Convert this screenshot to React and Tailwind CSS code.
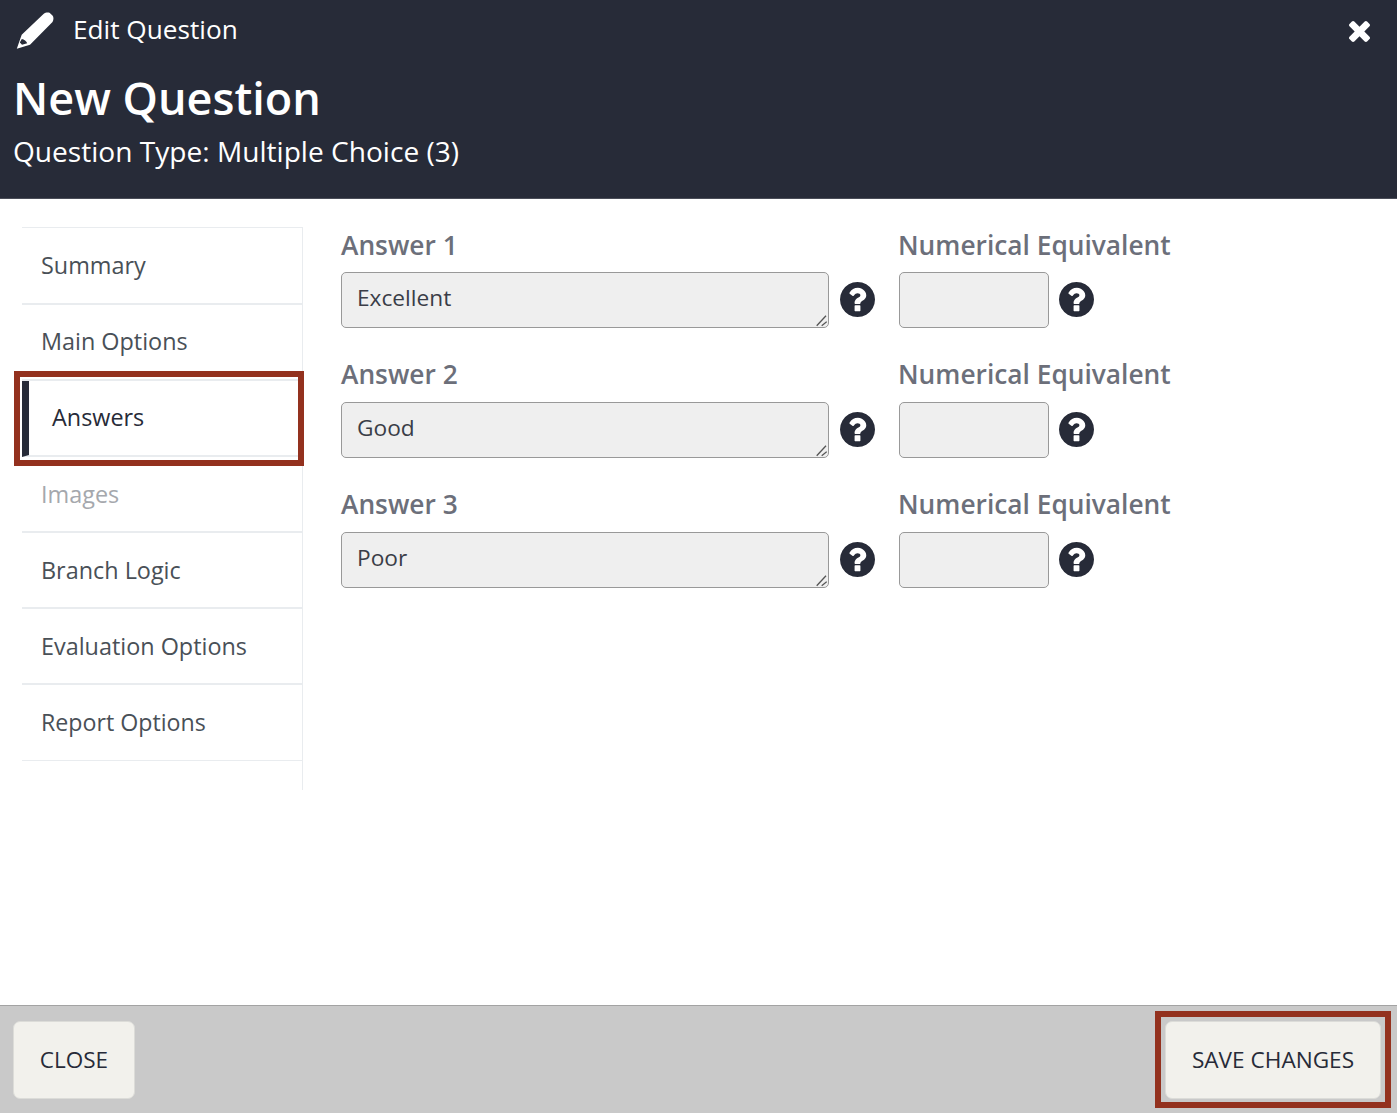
import React from "react";

const navItem = "flex h-[76px] items-center border-b-2 border-[#e9ecef] pl-[19px] text-[23.4px] text-[#495057]";

function Pencil() {
  return (
    <svg width="38" height="38" viewBox="0 0 38 38" className="ml-[16px] mt-[2px] shrink-0" fill="#fff">
      <path fillRule="evenodd" d="M27.5 2C29.5 .3 32 .3 33.5 .8L36.5 3.5C37.8 5 37.8 8 36.5 10L14 32.8L.8 36.7L5.700 22.700ZM5.800 27C8.200 27.200 10.400 29.200 11.200 31.300L6 32.800C5.200 31.600 4.600 30.900 3.800 30.400Z" />
    </svg>
  );
}

function Close() {
  return (
    <svg width="21" height="21" viewBox="110 166 1188 1188" fill="#fff" className="ml-auto mr-[27px] mt-[3px]">
      <path d="M1298 1122q0 40-28 68l-136 136q-28 28-68 28t-68-28l-294-294-294 294q-28 28-68 28t-68-28l-136-136q-28-28-28-68t28-68l294-294-294-294q-28-28-28-68t28-68l136-136q28-28 68-28t68 28l294 294 294-294q28-28 68-28t68 28l136 136q28 28 28 68t-28 68l-294 294 294 294q28 28 28 68z" />
    </svg>
  );
}

function Help({ ml }) {
  return (
    <svg width="35" height="35" viewBox="128 128 1536 1536" fill="#272b38" className={`${ml} mt-[-1px] shrink-0`}>
      <path d="M1024 1376v-192q0-14-9-23t-23-9h-192q-14 0-23 9t-9 23v192q0 14 9 23t23 9h192q14 0 23-9t9-23zm256-672q0-88-55.500-163t-138.500-116-170-41q-243 0-371 213-15 24 8 42l132 100q7 6 19 6 16 0 25-12 53-68 86-92 34-24 86-24 48 0 85.500 26t37.500 59q0 38-20 61t-68 45q-63 28-115.500 86.500t-52.500 125.500v36q0 14 9 23t23 9h192q14 0 23-9t9-23q0-19 21.500-49.500t54.500-49.500q32-18 49-28.500t46-35 44.500-48 28-60.500 12.500-81zm384 192q0 209-103 385.500t-279.500 279.500-385.500 103-385.500-103-279.500-279.500-103-385.500 103-385.500 279.500-279.500 385.500-103 385.500 103 279.500 279.500 103 385.500z" />
    </svg>
  );
}

function Row({ n, value, labelH, mt }) {
  const label = `${labelH} text-[26.3px] font-semibold leading-[37px] text-[#6c6f7a]`;
  return (
    <div className={`flex ${mt}`}>
      <div className="w-[558px]">
        <div className={label}>Answer {n}</div>
        <div className="flex items-center">
          <div className="relative">
            <textarea
              defaultValue={value}
              className="block h-[56px] w-[488px] resize-none rounded-[5px] border border-[#999] bg-[#efefef] px-[15px] py-[7px] text-[22.7px] leading-[36px] text-[#3a3d47] outline-none"
            />
            <svg width="12" height="12" viewBox="0 0 12 12" className="pointer-events-none absolute bottom-[1px] right-[2px]" stroke="#555" strokeWidth="1.3">
              <path d="M1.700 10.700L11 .7M6.700 10.700L11.700 6.700" />
            </svg>
          </div>
          <Help ml="ml-[11px]" />
        </div>
      </div>
      <div>
        <div className={`${label} ml-[-1px]`}>Numerical Equivalent</div>
        <div className="flex items-center">
          <input className="block h-[56px] w-[150px] rounded-[5px] border border-[#999] bg-[#efefef] outline-none" />
          <Help ml="ml-[10px]" />
        </div>
      </div>
    </div>
  );
}

export default function App() {
  return (
    <div className="flex h-[1113px] flex-col overflow-hidden bg-white font-['Open_Sans',sans-serif]">
      <header className="h-[199px] shrink-0 border-b border-[#4a4d58] bg-[#272b38] text-white">
        <div className="flex h-[60px] items-center">
          <Pencil />
          <span className="ml-[19px] text-[26.2px]">Edit Question</span>
          <Close />
        </div>
        <h1 className="ml-[13px] mt-[4px] text-[45px] font-semibold leading-[68px]">New Question</h1>
        <p className="ml-[13px] text-[28.1px] leading-[38px]">Question Type: Multiple Choice (3)</p>
      </header>

      <main className="flex flex-1 items-start pl-[22px] pt-[28px]">
        <nav className="h-[563px] w-[281px] shrink-0 border-r border-t border-[#e9ecef]">
          <div className={`${navItem} h-[77px] pt-[1px]`}>Summary</div>
          <div className={navItem}>Main Options</div>
          <div className="relative flex h-[76px] items-center border-b-2 border-l-[7px] border-[#e9ecef] border-l-[#272b38] pl-[23px] text-[23.4px] text-[#272b38]">
            Answers
            <div className="pointer-events-none absolute bottom-[-11px] left-[-15px] right-[-2px] top-[-10px] border-[6px] border-[#93311e]" />
          </div>
          <div className={`${navItem} pt-[2px] text-[#a5a8ad]`}>Images</div>
          <div className={`${navItem} pt-[2px]`}>Branch Logic</div>
          <div className={`${navItem} pt-[2px]`}>Evaluation Options</div>
          <div className="flex h-[76px] items-center border-b border-[#e9ecef] pl-[19px] text-[23.2px] text-[#495057]">Report Options</div>
        </nav>
        <section className="ml-[38px] flex-1">
          <Row n={1} value="Excellent" labelH="h-[45px]" mt="" />
          <Row n={2} value="Good" labelH="h-[46px]" mt="mt-[28px]" />
          <Row n={3} value="Poor" labelH="h-[46px]" mt="mt-[28px]" />
        </section>
      </main>

      <footer className="flex h-[108px] shrink-0 items-start justify-between border-t border-[#a3a3a3] bg-[#c9c9c9] pl-[13px] pr-[16px] pt-[15px]">
        <button className="h-[78px] w-[122px] rounded-[7px] border border-[#dcdcd8] bg-[#f2f1ec] text-[22.5px] text-[#272b38]">CLOSE</button>
        <div className="relative">
          <button className="block h-[78px] w-[216px] rounded-[7px] border border-[#dcdcd8] bg-[#f2f1ec] text-[22.6px] text-[#272b38]">SAVE CHANGES</button>
          <div className="pointer-events-none absolute bottom-[-9px] left-[-10px] right-[-10px] top-[-10px] border-[6px] border-[#93311e]" />
        </div>
      </footer>
    </div>
  );
}
